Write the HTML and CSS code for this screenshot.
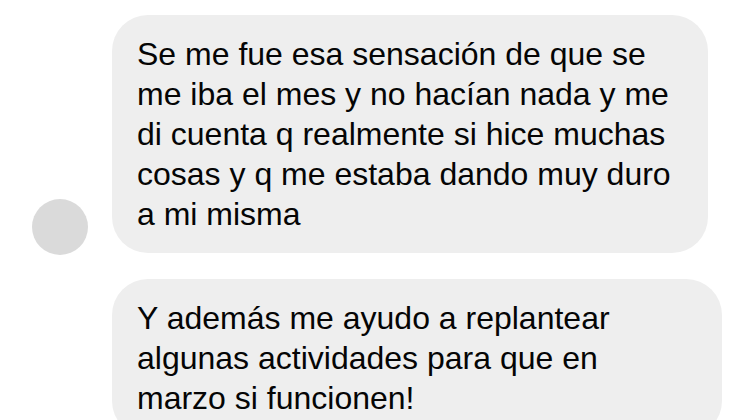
FILE: index.html
```html
<!DOCTYPE html>
<html lang="es">
<head>
    <meta charset="UTF-8">
    <meta name="viewport" content="width=device-width, initial-scale=1.0">
    <title>Mensajes</title>
    <link rel="stylesheet" href="styles.css">
</head>
<body>
    <div class="thread">
        <!-- First message, with the sender avatar -->
        <div class="message-row">
            <div class="avatar-col">
                <div class="avatar"></div>
            </div>
            <div class="bubble bubble-first">
                Se me fue esa sensación de que se me iba el mes y no hacían nada y me di cuenta q realmente si hice muchas cosas y q me estaba dando muy duro a mi misma
            </div>
        </div>

        <!-- Second message -->
        <div class="message-row">
            <div class="avatar-col"></div>
            <div class="bubble bubble-second">
                Y además me ayudo a replantear algunas actividades para que en marzo si funcionen!
            </div>
        </div>
    </div>
</body>
</html>
```

FILE: styles.css
```css
body {
    margin: 0;
    padding: 0;
    background: #fff;
    font-family: "Liberation Sans", Arial, sans-serif;
    color: #050505;
    overflow: hidden;
}
.thread {
    display: flex;
    flex-direction: column;
    gap: 26px;
    padding-top: 15px;
}
.message-row {
    display: flex;
    align-items: flex-end;
}
.avatar-col {
    width: 112px;
    flex-shrink: 0;
}
.avatar {
    width: 56px;
    height: 56px;
    margin-left: 32px;
    margin-bottom: -2px;
    border-radius: 50%;
    background: #dadada;
}
.bubble {
    box-sizing: border-box;
    background: #eeeeee;
    border-radius: 36px;
    font-size: 32px;
    line-height: 40px;
    padding: 19px 24px 19px 25px;
}
.bubble-first {
    width: 596px;
}
.bubble-second {
    width: 610px;
    padding-right: 34px;
}
```
